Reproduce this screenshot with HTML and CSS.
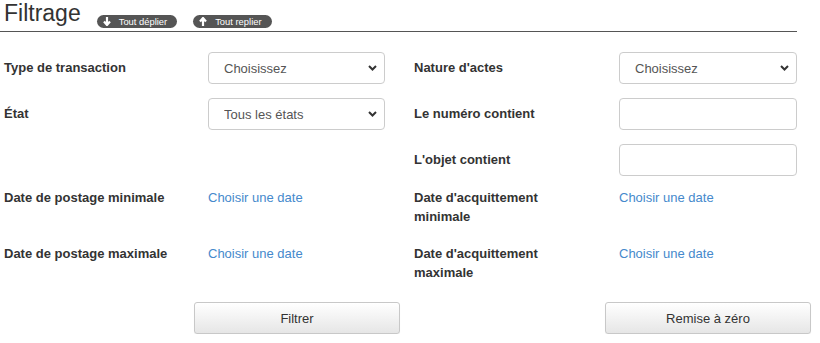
FILE: index.html
```html
<!DOCTYPE html>
<html lang="fr">
<head>
  <meta charset="UTF-8" />
  <title>Filtrage</title>
  <link rel="stylesheet" href="styles.css">
</head>
<body>

  <!-- Title bar with expand / collapse badges -->
  <header class="filter-head">
    <h2>Filtrage</h2>
    <a class="badge" href="#">
      <svg width="8" height="9" viewBox="0 0 8 9"><path d="M4 0v7M1 4.5l3 3.5 3-3.5" stroke="#fff" stroke-width="2.2" fill="none"/></svg>
      Tout déplier
    </a>
    <a class="badge" href="#">
      <svg width="8" height="9" viewBox="0 0 8 9"><path d="M4 9V2M1 4.5l3-3.5 3 3.5" stroke="#fff" stroke-width="2.2" fill="none"/></svg>
      Tout replier
    </a>
  </header>

  <form class="filters">
    <div class="row">
      <div class="field">
        <label>Type de transaction</label>
        <span class="select-wrap">
          <select><option>Choisissez</option></select>
          <svg class="chevron" width="9" height="6" viewBox="0 0 9 6"><path d="M1 1l3.5 3.5L8 1" stroke="#333" stroke-width="2" fill="none"/></svg>
        </span>
      </div>
      <div class="field">
        <label>Nature d'actes</label>
        <span class="select-wrap">
          <select><option>Choisissez</option></select>
          <svg class="chevron" width="9" height="6" viewBox="0 0 9 6"><path d="M1 1l3.5 3.5L8 1" stroke="#333" stroke-width="2" fill="none"/></svg>
        </span>
      </div>
    </div>

    <div class="row">
      <div class="field">
        <label>État</label>
        <span class="select-wrap">
          <select><option>Tous les états</option></select>
          <svg class="chevron" width="9" height="6" viewBox="0 0 9 6"><path d="M1 1l3.5 3.5L8 1" stroke="#333" stroke-width="2" fill="none"/></svg>
        </span>
      </div>
      <div class="field">
        <label>Le numéro contient</label>
        <input type="text" />
      </div>
    </div>

    <div class="row">
      <div class="field"></div>
      <div class="field">
        <label>L'objet contient</label>
        <input type="text" />
      </div>
    </div>

    <div class="row row-date first">
      <div class="field">
        <label>Date de postage minimale</label>
        <a href="#" class="date-link">Choisir une date</a>
      </div>
      <div class="field">
        <label>Date d'acquittement minimale</label>
        <a href="#" class="date-link">Choisir une date</a>
      </div>
    </div>

    <div class="row row-date">
      <div class="field">
        <label>Date de postage maximale</label>
        <a href="#" class="date-link">Choisir une date</a>
      </div>
      <div class="field">
        <label>Date d'acquittement maximale</label>
        <a href="#" class="date-link">Choisir une date</a>
      </div>
    </div>

    <div class="actions">
      <button type="button">Filtrer</button>
      <button type="button">Remise à zéro</button>
    </div>
  </form>

</body>
</html>
```

FILE: styles.css
```css
body {
  margin: 0;
  font-family: "Liberation Sans", Arial, sans-serif;
  font-size: 13px;
  line-height: 18.57px;
  color: #333;
  background: #fff;
}

/* ==== Header ==== */
.filter-head {
  display: flex;
  align-items: flex-start;
  gap: 16px;
  width: 797px;
  height: 31px;
  border-bottom: 1px solid #555;
}
.filter-head h2 {
  margin: 0;
  padding-left: 4px;
  font-size: 23px;
  font-weight: normal;
  line-height: 26px;
  color: #333;
}
.badge {
  display: inline-flex;
  align-items: center;
  gap: 8px;
  margin-top: 15px;
  height: 13px;
  padding: 0 10px 0 6px;
  border-radius: 7px;
  background: #555;
  color: #fff;
  font-size: 9.4px;
  line-height: 13px;
  text-decoration: none;
}

/* ==== Filter rows ==== */
.filters {
  margin-top: 20px;
}
.row {
  display: grid;
  grid-template-columns: 410px 410px;
  margin-bottom: 14px;
}
.field {
  display: flex;
  align-items: center;
  padding: 0 25px 0 4px;
}
.field + .field {
  padding-right: 23px;
}
.field label {
  flex: 0 0 204px;
  box-sizing: border-box;
  padding-right: 30px;
  font-weight: bold;
}
.field + .field label {
  flex-basis: 205px;
}
.select-wrap {
  position: relative;
  flex: 1;
  display: block;
}
.select-wrap select,
.field input {
  flex: 1;
  width: 100%;
  box-sizing: border-box;
  height: 32px;
  border: 1px solid #ccc;
  border-radius: 4px;
  background: #fff;
  font-family: inherit;
  font-size: 13px;
  color: #555;
  margin: 0;
}
.select-wrap select {
  -webkit-appearance: none;
  appearance: none;
  padding: 0 24px 0 15px;
}
.field input {
  padding: 0 12px;
}
.chevron {
  position: absolute;
  right: 8px;
  top: 13px;
  pointer-events: none;
}

.row-date {
  margin-bottom: 19px;
}
.row-date.first {
  margin-top: -1px;
}
.row-date .field {
  align-items: flex-start;
}
.row-date .field label {
  min-height: 37px;
}
.date-link {
  color: #4589cc;
  text-decoration: none;
}

/* ==== Buttons ==== */
.actions {
  display: grid;
  grid-template-columns: 410px 410px;
  justify-items: end;
  margin-top: 20px;
}
.actions button {
  width: 206px;
  height: 32px;
  margin-right: 10px;
  border: 1px solid #c8c8c8;
  border-radius: 3px;
  background: linear-gradient(#fff, #e6e6e6);
  box-shadow: 0 1px 1px rgba(0,0,0,0.06);
  font-family: inherit;
  font-size: 13px;
  color: #333;
  cursor: pointer;
}
.actions button + button {
  margin-right: 9px;
}
```
